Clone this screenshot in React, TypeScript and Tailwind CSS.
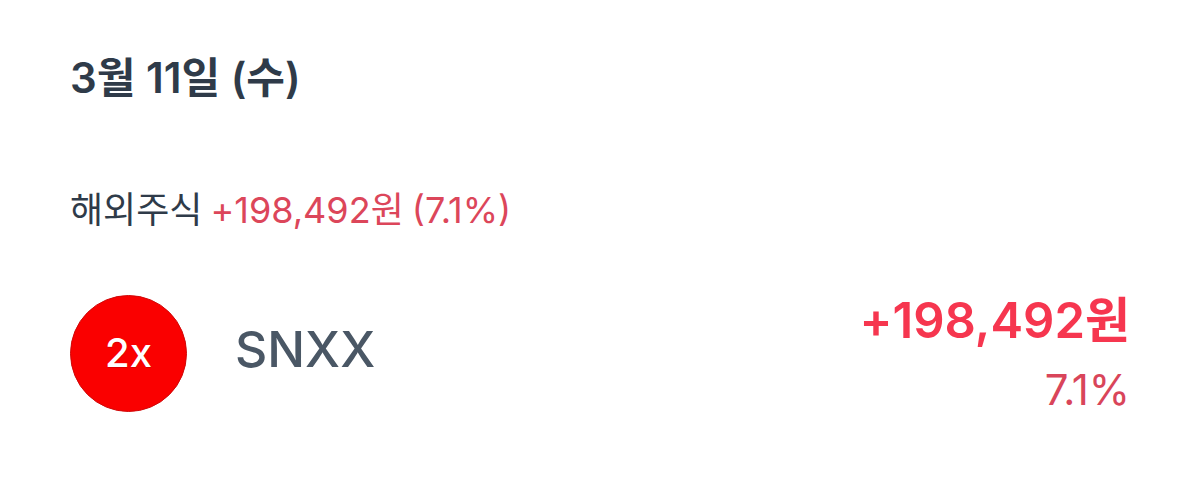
export default function App() {
  return (
    <main className="px-[70px] pt-12 pb-16 font-['Inter','Noto_Sans_CJK_KR',sans-serif] bg-white text-[#2f3b49]">
      <h1 className="text-[42px] leading-[60px] font-semibold">3월 11일 (수)</h1>
      <section className="mt-[72px]">
        <h2 className="flex items-baseline gap-2 text-[36px] leading-[60px] font-normal">
          <span>해외주식</span>
          <span className="flex gap-2 text-[#dc465a]">
            <span>+198,492원</span>
            <span>(7.1%)</span>
          </span>
        </h2>
        <div className="mt-[46px] flex items-center justify-between">
          <div className="flex items-center gap-12 pb-1">
            <div className="flex size-[117px] items-center justify-center rounded-full border border-[#d00808] bg-[#fa0000] text-[40px] font-medium text-white text-shadow-2xs">
              2x
            </div>
            <span className="pb-2 text-[50px] leading-[60px] font-medium text-[#4a5765]">SNXX</span>
          </div>
          <div className="text-right">
            <p className="text-[49px] leading-[70px] font-semibold text-[#f6364f]">+198,492원</p>
            <p className="text-[42px] leading-[68px] text-[#d9455a]">7.1%</p>
          </div>
        </div>
      </section>
    </main>
  );
}
